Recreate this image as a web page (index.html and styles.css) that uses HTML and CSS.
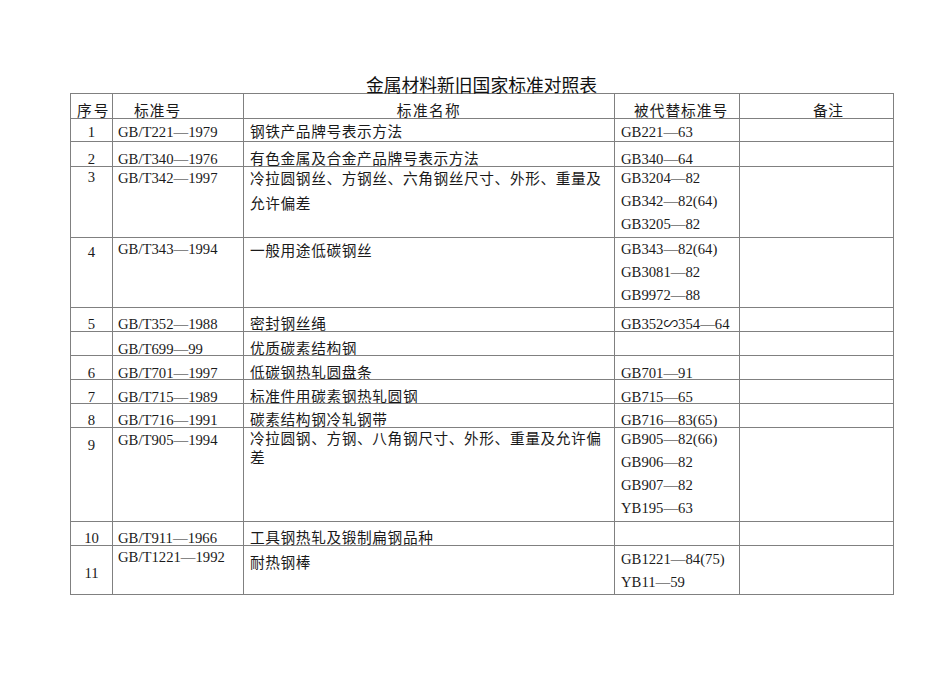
FILE: index.html
```html
<!DOCTYPE html>
<html lang="zh-CN">
<head>
<meta charset="utf-8">
<title>金属材料新旧国家标准对照表</title>
<link rel="stylesheet" href="styles.css">
</head>
<body>
<div class="page">
  <div class="title">金属材料新旧国家标准对照表</div>
  <table class="std">
    <colgroup>
      <col class="c1"><col class="c2"><col class="c3"><col class="c4"><col class="c5">
    </colgroup>
    <tr class="h25">
      <td class="hd hd1 p11">序号</td>
      <td class="hd hd2 p11">标准号</td>
      <td class="hd hd3 p11">标准名称</td>
      <td class="hd hd4 p11">被代替标准号</td>
      <td class="hd hd5 p11">备注</td>
    </tr>
    <tr class="h23">
      <td class="no p7">1</td>
      <td class="code p7">GB/T221—1979</td>
      <td class="name p7">钢铁产品牌号表示方法</td>
      <td class="old p7">GB221—63</td>
      <td></td>
    </tr>
    <tr class="h25">
      <td class="no p11">2</td>
      <td class="code p11">GB/T340—1976</td>
      <td class="name p11">有色金属及合金产品牌号表示方法</td>
      <td class="old p11">GB340—64</td>
      <td></td>
    </tr>
    <tr class="h71">
      <td class="no p4">3</td>
      <td class="code p5">GB/T342—1997</td>
      <td class="name lh25">冷拉圆钢丝、方钢丝、六角钢丝尺寸、外形、重量及<br>允许偏差</td>
      <td class="old multi">GB3204—82<br>GB342—82(64)<br>GB3205—82</td>
      <td></td>
    </tr>
    <tr class="h70">
      <td class="no p8">4</td>
      <td class="code p5">GB/T343—1994</td>
      <td class="name p7">一般用途低碳钢丝</td>
      <td class="old multi">GB343—82(64)<br>GB3081—82<br>GB9972—88</td>
      <td></td>
    </tr>
    <tr class="h24">
      <td class="no p10">5</td>
      <td class="code p10">GB/T352—1988</td>
      <td class="name p10">密封钢丝绳</td>
      <td class="old p10">GB352∽354—64</td>
      <td></td>
    </tr>
    <tr class="h24">
      <td class="no p11"></td>
      <td class="code p11">GB/T699—99</td>
      <td class="name p11">优质碳素结构钢</td>
      <td class="old p11"></td>
      <td></td>
    </tr>
    <tr class="h24">
      <td class="no p11">6</td>
      <td class="code p11">GB/T701—1997</td>
      <td class="name p11">低碳钢热轧圆盘条</td>
      <td class="old p11">GB701—91</td>
      <td></td>
    </tr>
    <tr class="h24">
      <td class="no p11">7</td>
      <td class="code p11">GB/T715—1989</td>
      <td class="name p11">标准件用碳素钢热轧圆钢</td>
      <td class="old p11">GB715—65</td>
      <td></td>
    </tr>
    <tr class="h24">
      <td class="no p10">8</td>
      <td class="code p10">GB/T716—1991</td>
      <td class="name p10">碳素结构钢冷轧钢带</td>
      <td class="old p10">GB716—83(65)</td>
      <td></td>
    </tr>
    <tr class="h94">
      <td class="no p11">9</td>
      <td class="code p6">GB/T905—1994</td>
      <td class="name lh19">冷拉圆钢、方钢、八角钢尺寸、外形、重量及允许偏<br>差</td>
      <td class="old multi">GB905—82(66)<br>GB906—82<br>GB907—82<br>YB195—63</td>
      <td></td>
    </tr>
    <tr class="h24">
      <td class="no p10">10</td>
      <td class="code p10">GB/T911—1966</td>
      <td class="name p10">工具钢热轧及锻制扁钢品种</td>
      <td class="old p10"></td>
      <td></td>
    </tr>
    <tr class="h49">
      <td class="no p21">11</td>
      <td class="code p5">GB/T1221—1992</td>
      <td class="name p11">耐热钢棒</td>
      <td class="old multi2">GB1221—84(75)<br>YB11—59</td>
      <td></td>
    </tr>
  </table>
</div>
</body>
</html>
```

FILE: styles.css
```css
html, body {
  margin: 0;
  padding: 0;
  background: #ffffff;
}

.page {
  padding: 75px 0 0 70px;
  color: #1a1a1a;
}

.title {
  width: 823px;
  text-align: center;
  font-family: "Noto Sans CJK SC", "Noto Sans", sans-serif;
  font-size: 17.8px;
  line-height: 18px;
  height: 18px;
  color: #111111;
}

.std {
  border-collapse: collapse;
  table-layout: fixed;
  width: 823px;
  font-family: "Liberation Serif", "Noto Sans CJK SC", serif;
  font-size: 14.7px;
  color: #1a1a1a;
}

.c1 { width: 42px; }
.c2 { width: 131px; }
.c3 { width: 371px; }
.c4 { width: 125px; }
.c5 { width: 154px; }

.std td {
  border: 1px solid #808080;
  padding: 0 0 0 6px;
  vertical-align: top;
  line-height: 12px;
  white-space: nowrap;
  overflow: hidden;
}

.h23 { height: 23px; }
.h24 { height: 24px; }
.h25 { height: 25px; }
.h49 { height: 49px; }
.h70 { height: 70px; }
.h71 { height: 71px; }
.h94 { height: 94px; }

.std td.no {
  padding-left: 0;
  text-align: center;
}

.std td.code {
  padding-left: 5px;
}

.std td.name,
.std td.hd {
  letter-spacing: 0.6px;
}

.std td.hd1 { padding-left: 6px; text-align: left; letter-spacing: 2px; }
.std td.hd2 { padding-left: 21px; letter-spacing: 1px; }
.std td.hd3 { padding-left: 0; text-align: center; letter-spacing: 1.4px; }
.std td.hd4 { padding-left: 19px; letter-spacing: 1px; }
.std td.hd5 { padding-left: 73px; letter-spacing: 0.5px; }

.std td.p4 { padding-top: 4px; }
.std td.p5 { padding-top: 5px; }
.std td.p6 { padding-top: 6px; }
.std td.p7 { padding-top: 7px; }
.std td.p8 { padding-top: 8px; }
.std td.p10 { padding-top: 10px; }
.std td.p11 { padding-top: 11px; }
.std td.p21 { padding-top: 21px; }

.std td.lh25 {
  line-height: 25px;
  padding-top: 0;
}

.std td.lh19 {
  line-height: 19px;
  padding-top: 2px;
}

.std td.multi {
  line-height: 23px;
  padding-top: 0;
}

.std td.multi2 {
  line-height: 23px;
  padding-top: 2px;
}
```
